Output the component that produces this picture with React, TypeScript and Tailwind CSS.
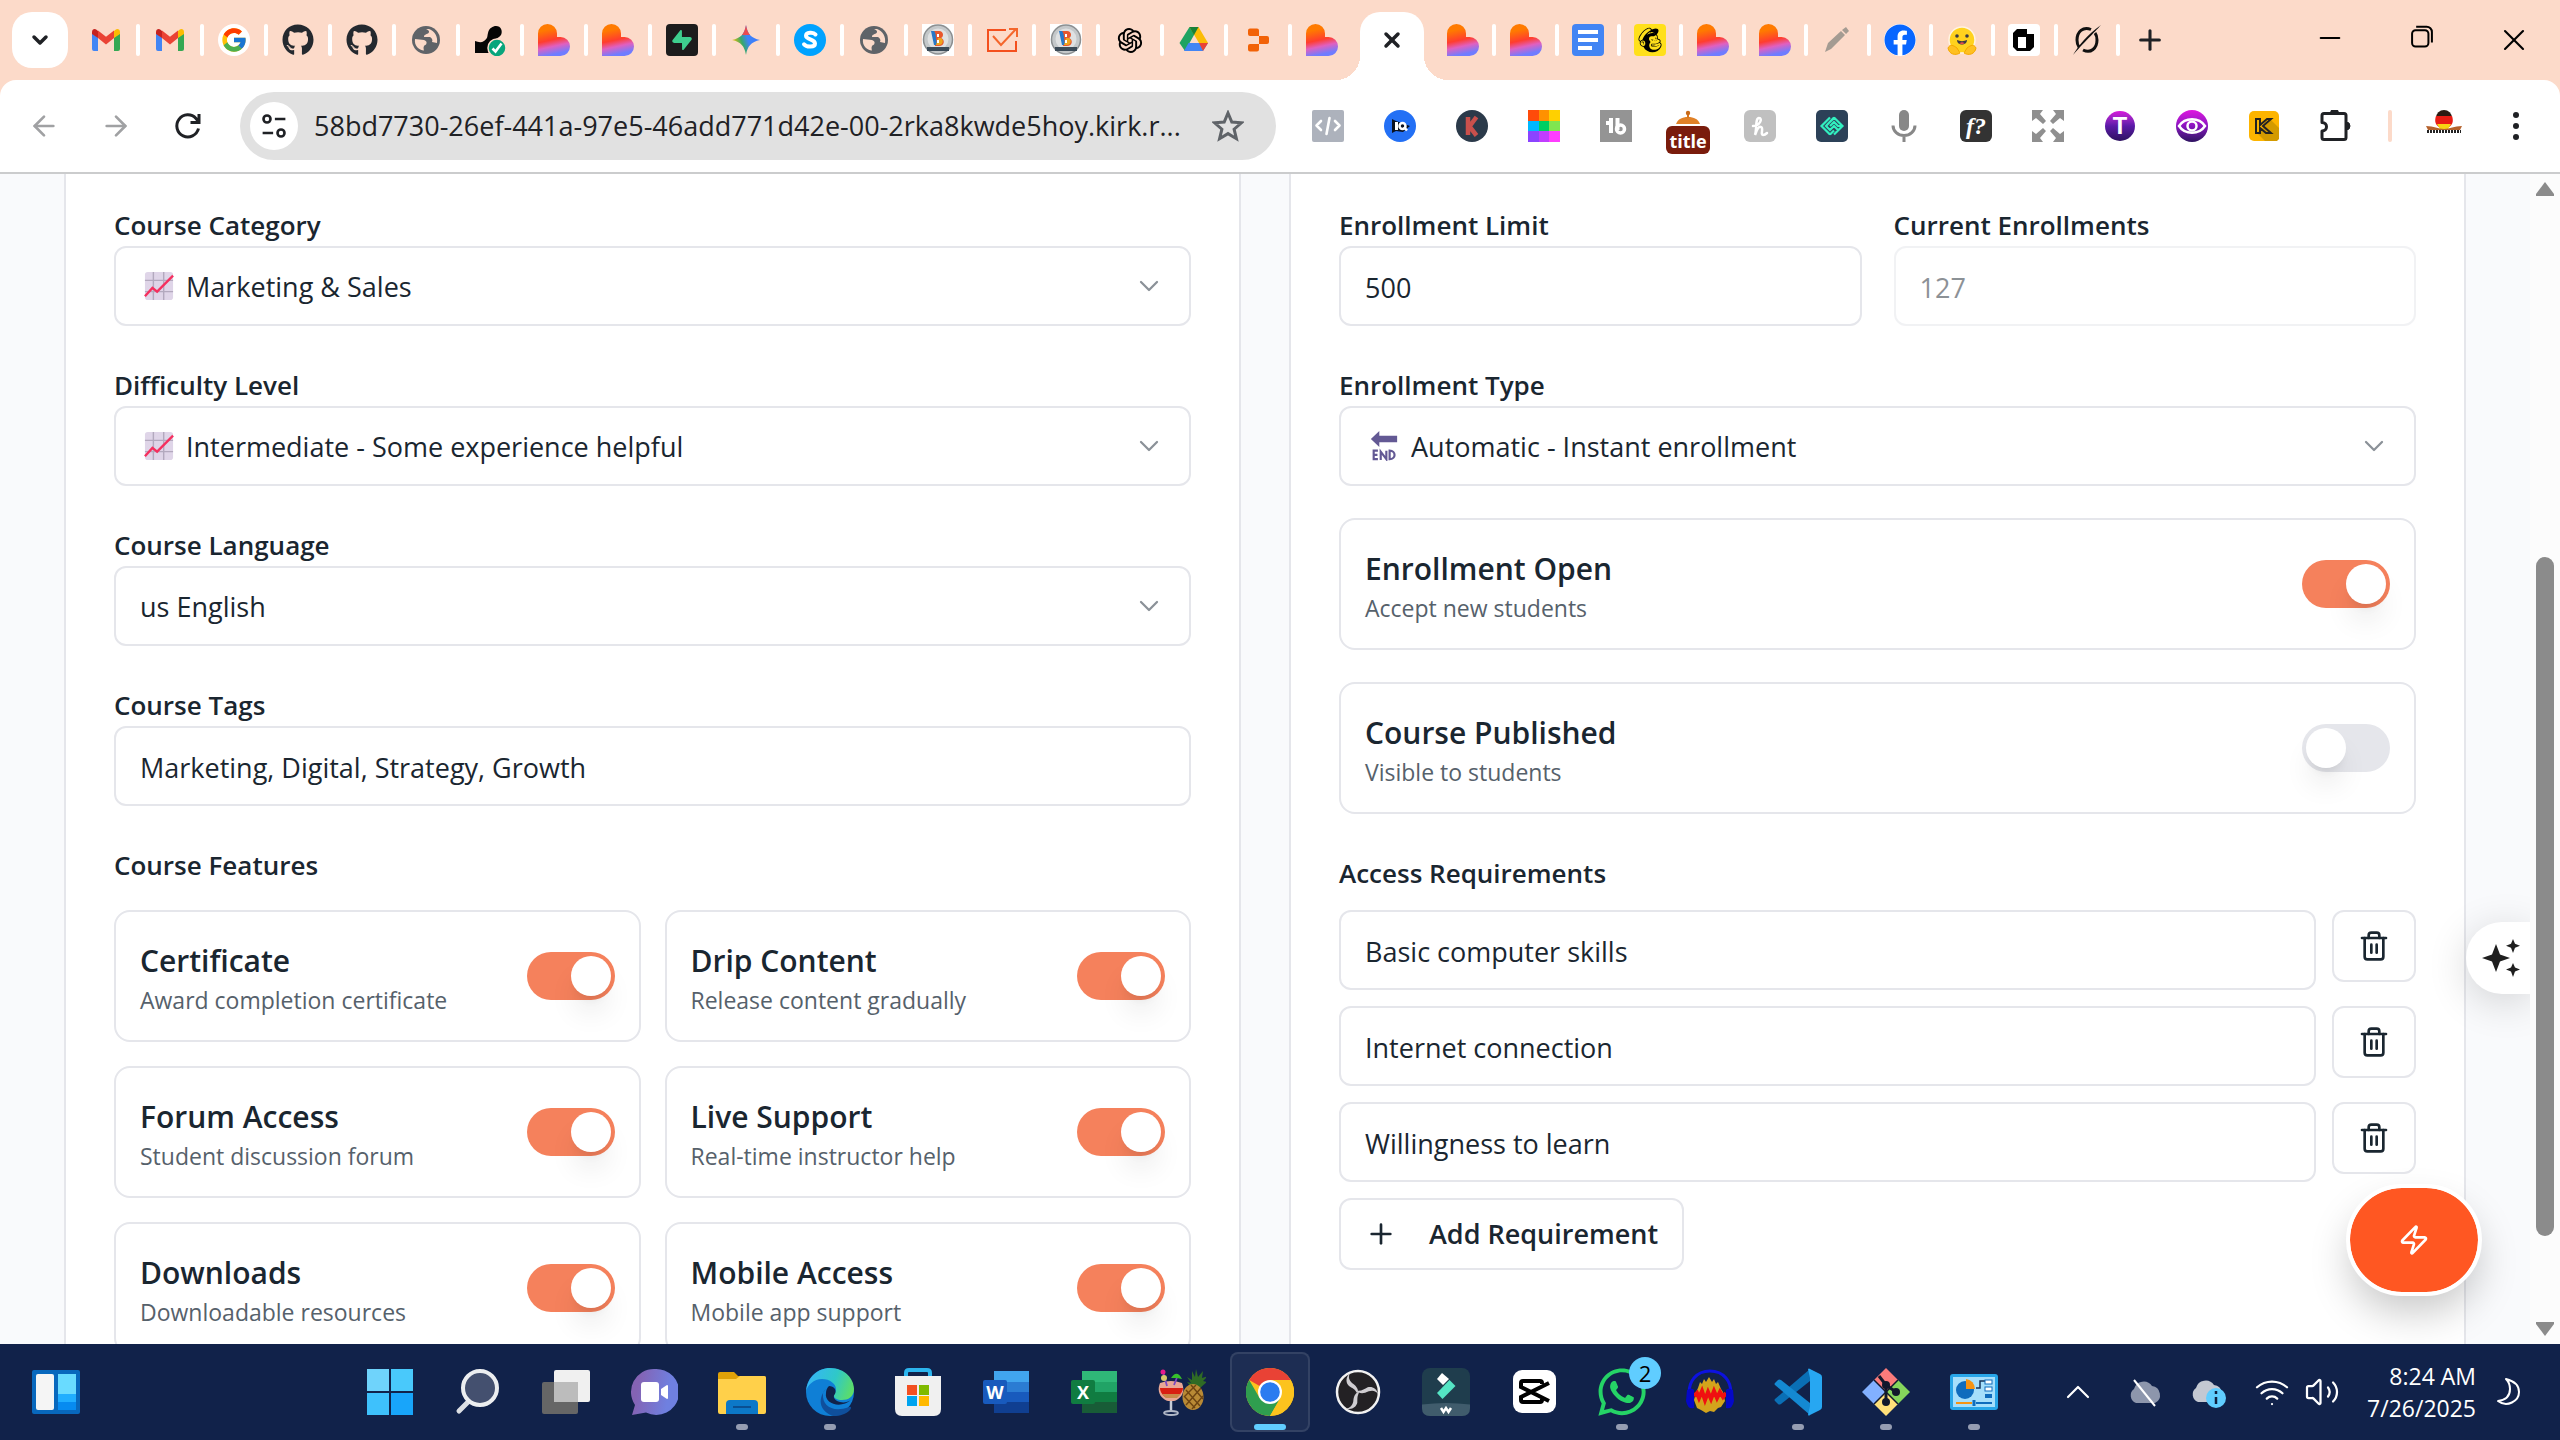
import React, { useId, useState } from "react";
import { ArrowLeft, ArrowRight, ChevronDown, ChevronUp, Minus, Plus, Trash2, Wifi, Volume2, X, Zap } from "lucide-react";
import { FaGithub, FaFacebook, FaMailchimp, FaWhatsapp } from "react-icons/fa";
import { FcGoogle } from "react-icons/fc";
import { AiOutlineOpenAI } from "react-icons/ai";
import { SiSupabase } from "react-icons/si";

type IconProps = { children?: React.ReactNode; box?: string; className?: string };

function Svg({ children, box = "0 0 32 32", className = "size-8" }: IconProps) {
  return (
    <svg viewBox={box} className={className} fill="none" aria-hidden="true">
      {children}
    </svg>
  );
}

/* ---------- favicons ---------- */

const Gmail = () => (
  <Svg>
    <path d="M2 27V9l6 4.500V27H4a2 2 0 0 1-2-2z" fill="#4285f4" />
    <path d="M24 27V13.500L30 9v16a2 2 0 0 1-2 2z" fill="#34a853" />
    <path d="M24 14V7l1.500-1.300C27.500 4 30 5.300 30 8v2z" fill="#fbbc04" />
    <path d="M2 10V8c0-2.700 2.500-4 4.500-2.300L8 7v7z" fill="#c5221f" />
    <path d="M8 14V6.500l8 6.200 8-6.200V14l-8 6.500z" fill="#ea4335" />
  </Svg>
);
const Google = () => (
  <span className="flex size-8 items-center justify-center rounded-full bg-white">
    <FcGoogle className="size-7" />
  </span>
);
const Github = () => <FaGithub className="size-8 text-[#24292f]" />;
const Globe = () => (
  <Svg>
    <circle cx="16" cy="16" r="14" fill="#5f6368" />
    <path d="M16 5c3 1 4 3 2 4.500-2 1-4 1-4 3.500h6c2 1 3 3 2 5l5 1c1-6-2-12-8-14zM5 15l9 1c3 1 3 3 2 4.500-2 1-3 2-2 6C9 26 4 22 5 15z" fill="#fcdac9" />
  </Svg>
);
const CheckBlob = () => (
  <Svg>
    <path d="M1 29V17c3 1 6 2 9 0 4-3 3-4 4-8 1-5 5-7 8-7 5 0 7 5 5 9-2 3-5 3-7 6l-4 12z" fill="#050505" />
    <circle cx="23" cy="24" r="9" fill="#08a57c" stroke="#fcdac9" strokeWidth="1.500" />
    <path d="m18.500 24.500 3 3 6-8" stroke="#fff" strokeWidth="2.600" />
  </Svg>
);
const Heart = () => {
  const id = useId();
  return (
    <Svg>
      <defs>
        <linearGradient id={id} x1="13" y1="0" x2="20" y2="32" gradientUnits="userSpaceOnUse">
          <stop offset=".15" stopColor="#ff7a00" />
          <stop offset=".48" stopColor="#ff3d2e" />
          <stop offset=".68" stopColor="#e060c0" />
          <stop offset=".92" stopColor="#6f7cff" />
        </linearGradient>
      </defs>
      <path d="M0 9.500A9.500 9.500 0 0 1 19 9.500V13h3.500a9.500 9.500 0 0 1 0 19H0z" fill={`url(#${id})`} />
    </Svg>
  );
};
const Supabase = () => (
  <span className="flex size-8 items-center justify-center rounded-sm bg-[#1c1c1c]">
    <SiSupabase className="size-5 text-[#3ecf8e]" />
  </span>
);
const Gemini = () => {
  const id = useId();
  return (
    <Svg>
      <defs>
        <linearGradient id={id} x1="4" y1="22" x2="28" y2="14" gradientUnits="userSpaceOnUse">
          <stop offset="0" stopColor="#f5c000" />
          <stop offset=".35" stopColor="#35a86b" />
          <stop offset=".6" stopColor="#3f83f5" />
          <stop offset="1" stopColor="#3a7cff" />
        </linearGradient>
      </defs>
      <path d="M16 1c1.500 9 5 13 14 15-9 2-12.500 6-14 15-1.500-9-5-13-14-15 9-2 12.500-6 14-15z" fill={`url(#${id})`} />
      <path d="M16 1c.8 4.500 2 7.500 4 10h-8c2-2.500 3.200-5.500 4-10z" fill="#ea4a50" />
    </Svg>
  );
};
const Skype = () => (
  <Svg>
    <circle cx="16" cy="16" r="16" fill="#00a2ff" />
    <path d="M21.500 10.500c-2-2.500-9.500-2.500-9.500 1.300 0 4.200 9 3 9 7.700 0 4-8.500 4-11 .8" stroke="#fff" strokeWidth="4" strokeLinecap="round" />
  </Svg>
);
const Badge = () => (
  <Svg>
    <path d="M0 0h32v32H0z" fill="#fff" />
    <circle cx="16" cy="15.500" r="14.500" fill="#c4c8ca" stroke="#8b8f91" strokeWidth="1.500" />
    <circle cx="16" cy="15" r="10.500" fill="#dfe1e2" />
    <path d="M10 7h7c5 0 5 6 2 7 4 1 4 8-2 8h-4z" fill="#e8572d" />
    <path d="M9 7h3c3 3 1 9 4 14h-4z" fill="#2878c8" />
    <path d="M16 14h3c3 2 2 7-2 7h-3z" fill="#eea51c" />
    <path d="M15 10h2v3h-2zM15 16h2v3h-2z" fill="#fff" />
    <path d="M5 23h22v4H5z" fill="#3c4b58" />
  </Svg>
);
const CheckSquare = () => (
  <Svg>
    <path d="M20 6H2v21h28V17" stroke="#f4501e" strokeWidth="2" />
    <path d="m7 12 8 9L30 5m-7 0h8v8" stroke="#f4662c" strokeWidth="2" />
  </Svg>
);
const OpenAi = () => <AiOutlineOpenAI className="size-8 text-black" />;
const Drive = () => (
  <Svg>
    <path d="M11.500 3h9L16 11 7 27 1.500 19z" fill="#1ea362" />
    <path d="M11.500 3h9L30 19h-9z" fill="#fbbc04" />
    <path d="M16 11 11.500 3h9z" fill="#188038" />
    <path d="M10.500 19H30l-5 8H6z" fill="#4285f4" />
    <path d="M21 19h9l-5 8z" fill="#ea4335" />
  </Svg>
);
const Replit = () => (
  <Svg>
    <path d="M6 6.500a2 2 0 0 1 2-2h7a2 2 0 0 1 2 2V12H8a2 2 0 0 1-2-2zM17 12h8a2 2 0 0 1 2 2v4a2 2 0 0 1-2 2h-8zM6 22a2 2 0 0 1 2-2h9v5.500a2 2 0 0 1-2 2H8a2 2 0 0 1-2-2z" fill="#f26207" />
  </Svg>
);
const Docs = () => (
  <Svg>
    <rect width="32" height="32" rx="4" fill="#4285f4" />
    <path d="M6 8h20M6 16h20M6 24h14" stroke="#fff" strokeWidth="4" />
  </Svg>
);
const Mailchimp = () => (
  <span className="flex size-8 items-center justify-center rounded-sm bg-[#ffe01b]">
    <FaMailchimp className="size-7 text-black" />
  </span>
);
const Pen = () => (
  <Svg>
    <path d="m4 28 3-9L20 7l4 4L10 25zM21 6l4-3 3 4-3 3z" fill="#a49b92" />
  </Svg>
);
const Facebook = () => (
  <span className="flex size-8 items-center justify-center rounded-full bg-white">
    <FaFacebook className="size-8 text-[#0866ff]" />
  </span>
);
const Hugging = () => (
  <Svg>
    <circle cx="16" cy="16" r="13" fill="#ffd21e" stroke="#fff3e0" strokeWidth="1.500" />
    <circle cx="11" cy="12" r="1.800" fill="#3a3b45" />
    <circle cx="21" cy="12" r="1.800" fill="#3a3b45" />
    <path d="M11 16c3 1.500 7 1.500 10 0 0 6-10 6-10 0z" fill="#3a3b45" />
    <path d="M13.500 19c2-1 3-1 5 0-1 1.500-4 1.500-5 0z" fill="#ef4e4e" />
    <path d="M2 24c2-4 5-3 9 0l3 5c-5 3-11 1-12-5zM30 24c-2-4-5-3-9 0l-3 5c5 3 11 1 12-5z" fill="#ffc021" stroke="#f5a800" />
  </Svg>
);
const Cube = () => (
  <Svg>
    <rect width="32" height="32" rx="4" fill="#fff" />
    <path d="M5 9l4-4h10v5h7v13l-4 4H9l-4-4z" fill="#000" />
    <path d="M10 13h8v11h-8z" fill="#fff" />
  </Svg>
);
const Slashed = () => (
  <Svg>
    <path d="M20 5.500C12 2 6 8 6 16c0 3 .8 5.500 2 7M12 26c8 4 14-2 14-10 0-3-.8-5.500-2-7" stroke="#111" strokeWidth="3" />
    <path d="M30 1C22 10 18 13 2 31c6-10 14-20 28-30z" fill="#111" />
  </Svg>
);

/* ---------- toolbar extensions ---------- */

const CodeExt = () => (
  <Svg>
    <rect width="32" height="32" rx="2" fill="#adb2bc" />
    <path d="m9 11-4.500 4.500L9 20M23 11l4.500 4.500L23 20M17.500 8l-3 16" stroke="#fff" strokeWidth="2.600" strokeLinecap="round" strokeLinejoin="round" />
  </Svg>
);
const IqExt = () => (
  <Svg>
    <circle cx="16" cy="16" r="16" fill="#2370f5" />
    <path d="M8 9v14l4-2 7 1 7-6-14-5z" fill="#0b1220" />
    <path d="M12.500 12v8" stroke="#fff" strokeWidth="3" />
    <circle cx="18.500" cy="16" r="3" stroke="#fff" strokeWidth="2.500" />
    <path d="m20 17 3 3.500" stroke="#fff" strokeWidth="2.500" />
  </Svg>
);
const LetterDisc = () => (
  <Svg>
    <circle cx="16" cy="16" r="16" fill="#2b3a4a" />
    <path d="M12 7v18M20.500 7l-7 9.500 7 9" stroke="#c9504c" strokeWidth="4.500" />
  </Svg>
);
const Palette = () => (
  <span className="grid size-8 grid-cols-3 grid-rows-3">
    <i className="bg-[#ff4b0a]" /><i className="bg-[#ff9100]" /><i className="bg-[#ffd000]" />
    <i className="bg-[#00b8ff]" /><i className="bg-[#00cf63]" /><i className="bg-[#80e650]" />
    <i className="bg-[#8b44ff]" /><i className="bg-[#c13dff]" /><i className="bg-[#ff3dff]" />
  </span>
);
const TbExt = () => (
  <Svg>
    <path d="M0 0h32v32H0z" fill="#949494" />
    <path d="M6 13h7M11 8v15M17.500 8v12" stroke="#fff" strokeWidth="4" />
    <circle cx="20.500" cy="19" r="4" stroke="#fff" strokeWidth="3.500" />
  </Svg>
);
const TitleExt = () => (
  <span className="mt-3 flex flex-col items-center">
    <Svg box="0 0 32 16" className="h-4 w-8">
      <path d="M4 14c2-5 6-7 12-7s10 2 12 7z" fill="#e08127" />
      <path d="M16 3v5" stroke="#d9771f" strokeWidth="2" />
      <circle cx="16" cy="3" r="2.200" fill="#c96b1a" />
    </Svg>
    <span className="flex h-7 w-11 items-center justify-center rounded-md bg-[#7a1c0c] pt-0.5 text-lg leading-none font-bold text-white">title</span>
  </span>
);
const HoneyExt = () => (
  <Svg>
    <rect width="32" height="32" rx="6" fill="#c0c0c0" />
    <path d="M9 16c7 0 10-8 6-8-4 0-2 12-4 17 2-6 4-9 6-8 3 1-1 8 2 8 2 0 3-1 4-2" stroke="#fff" strokeWidth="2.500" strokeLinecap="round" />
  </Svg>
);
const DiamondExt = () => (
  <Svg>
    <rect width="32" height="32" rx="5" fill="#2c4158" />
    <path d="M14 7.500 5.500 16l8.500 8.500M18 7.500l8.500 8.500-8.500 8.500M18 7.500l-8 8.500 4 4 4-4 4 4M14 12l4-4M27 16h-5l-4-4-4 4M14 24.500l4-4" stroke="#32f0c0" strokeWidth="2.200" />
  </Svg>
);
const FExt = () => (
  <span className="flex size-8 items-center justify-center rounded-md bg-[#333] font-['Liberation_Serif',serif] text-2xl leading-none font-bold text-white italic">f?</span>
);
const Expand = () => (
  <Svg>
    <path d="M0 0h11L8 4l6 7-3 3-7-6-4 3zM32 0v11l-4-3-7 6-3-3 6-7-3-4zM0 32V21l4 3 7-6 3 3-6 7 3 4zM32 32H21l3-4-6-7 3-3 7 6 4-3z" fill="#8f8f8f" />
  </Svg>
);
const TDisc = () => (
  <span className="flex size-[30px] items-center justify-center rounded-full bg-linear-to-b from-[#d916dc] via-[#5b1aa8] to-[#2d1260] font-['Roboto',sans-serif] text-2xl leading-none font-bold text-white">T</span>
);
const EyeDisc = () => (
  <span className="flex size-8 items-center justify-center rounded-full bg-linear-to-b from-[#e014e0] via-[#8a12c0] to-[#2d1260]">
    <Svg>
      <path d="M3 16c6-9 20-9 26 0-6 9-20 9-26 0z" stroke="#fff" strokeWidth="2.500" />
      <circle cx="16" cy="16" r="4.500" stroke="#fff" strokeWidth="2.500" />
    </Svg>
  </span>
);
const KBox = () => (
  <Svg>
    <rect x="1" y="1" width="30" height="30" rx="5" fill="#fdb400" />
    <path d="m9 23 8 8h12l2-2V18l-8-8z" fill="#d39a00" />
    <path d="M8 9h4v6l7-6h4l-8 7 8 7h-5l-6-5v5H8z" stroke="#222" strokeWidth="2" />
  </Svg>
);
const Puzzle = () => (
  <Svg>
    <path d="M2 5.500q0-2 2-2h20q2 0 2 2v22q0 2-2 2H4q-2 0-2-2v-6.500c6 0 6-8.500 0-8.500z" stroke="#1f2125" strokeWidth="3" strokeLinejoin="round" />
    <path d="M10.500 3a4 4 0 0 1 8 0zM26 12a4 4 0 0 1 0 8z" fill="#1f2125" stroke="#1f2125" />
  </Svg>
);
const Avatar = () => (
  <Svg box="0 0 40 32" className="h-8 w-10">
    <path d="M12 8a8 8 0 0 1 16 0z" fill="#2b1a12" />
    <path d="M12 6h16c2 6 0 9-3 11H15c-3-2-5-5-3-11z" fill="#e81c14" />
    <path d="M13 14h14l-3 5h-8z" fill="#f8d312" />
    <path d="M2 16c8 0 12 3 18 3s10-3 18-3l-2 4H4z" fill="#b5622c" />
    <path d="M3 21.500h34" stroke="#222" strokeWidth="3" strokeDasharray="2 1" />
  </Svg>
);
const MicIcon = () => (
  <Svg>
    <rect x="11" y="0" width="10" height="21" rx="5" fill="#888" />
    <path d="M5 15.500a11 10 0 0 0 22 0M16 26v6" stroke="#888" strokeWidth="3" />
  </Svg>
);

const leftTabs: [string, React.FC][] = [
  ["Gmail inbox", Gmail], ["Gmail", Gmail], ["Google", Google], ["GitHub", Github], ["GitHub repository", Github],
  ["Website", Globe], ["Verified", CheckBlob], ["Lovable", Heart], ["Lovable project", Heart], ["Supabase", Supabase],
  ["Gemini", Gemini], ["Skype", Skype], ["Site", Globe], ["Badge", Badge], ["Tasks", CheckSquare], ["Badge admin", Badge],
  ["ChatGPT", OpenAi], ["Drive", Drive], ["Replit", Replit], ["Lovable editor", Heart],
];
const rightTabs: [string, React.FC][] = [
  ["Lovable preview", Heart], ["Lovable app", Heart], ["Docs", Docs], ["Mailchimp", Mailchimp], ["Lovable docs", Heart],
  ["Lovable home", Heart], ["Editor", Pen], ["Facebook", Facebook], ["Hugging Face", Hugging], ["Cube", Cube], ["Grok", Slashed],
];

function TabStrip() {
  return (
    <div className="flex h-20 items-center">
      <button aria-label="Search tabs" className="ml-3 flex size-14 shrink-0 items-center justify-center rounded-[20px] bg-white text-[#1f2125]">
        <ChevronDown className="size-6" strokeWidth={3.500} />
      </button>
      <div className="ml-1.5 flex">
        {leftTabs.map(([name, Icon], i) => (
          <button key={name} aria-label={name} className="relative flex h-8 w-16 shrink-0 items-center justify-center">
            <Icon />
            {i < leftTabs.length - 1 && <span className="absolute -right-0.5 h-8 w-1 rounded-full bg-white" />}
          </button>
        ))}
      </div>
      <div className="relative ml-1.5 flex h-[68px] w-16 shrink-0 items-center justify-center self-end rounded-t-[20px] bg-white">
        <span className="absolute bottom-0 -left-6 size-6 bg-[radial-gradient(circle_at_0_0,transparent_24px,white_24px)]" />
        <span className="absolute -right-6 bottom-0 size-6 bg-[radial-gradient(circle_at_100%_0,transparent_24px,white_24px)]" />
        <button aria-label="Close tab" className="mb-3 text-[#1f2125]"><X className="size-6" strokeWidth={3.500} /></button>
      </div>
      <div className="ml-2 flex w-[686px] shrink-0">
        {rightTabs.map(([name, Icon]) => (
          <button key={name} aria-label={name} className="relative flex h-8 flex-1 items-center justify-center">
            <Icon />
            <span className="absolute -right-0.5 h-8 w-1 rounded-full bg-white" />
          </button>
        ))}
      </div>
      <button aria-label="New tab" className="ml-4 text-[#1f2125]"><Plus className="size-8" strokeWidth={2.300} /></button>
      <div className="ml-auto flex text-black">
        <button aria-label="Minimize" className="flex w-[92px] justify-center"><Minus className="size-8" strokeWidth={1.500} /></button>
        <button aria-label="Restore" className="flex w-[92px] justify-center">
          <Svg box="0 0 24 24" className="size-7">
            <rect x="3.500" y="7" width="14" height="14" rx="3" stroke="#000" strokeWidth="1.700" />
            <path d="M7 4h9a4.500 4.500 0 0 1 4.500 4.500v9" stroke="#000" strokeWidth="1.700" />
          </Svg>
        </button>
        <button aria-label="Close" className="flex w-[92px] justify-center"><X className="size-9" strokeWidth={1.400} /></button>
      </div>
    </div>
  );
}

const extensions: [string, React.FC][] = [
  ["Code", CodeExt], ["IQ", IqExt], ["Keywords", LetterDisc], ["Colors", Palette], ["Toolbox", TbExt], ["Title", TitleExt],
  ["Honey", HoneyExt], ["Diamond", DiamondExt], ["Microphone", MicIcon], ["Fonts", FExt], ["Full page", Expand],
  ["Type", TDisc], ["Vision", EyeDisc], ["Kit", KBox], ["Extensions", Puzzle],
];

function Toolbar() {
  return (
    <div className="flex h-[94px] items-center rounded-t-2xl border-b-2 border-[#cbcccd] bg-white">
      <div className="ml-2 flex shrink-0">
        <button aria-label="Back" className="flex w-[72px] justify-center text-[#a0a1a3]"><ArrowLeft className="size-8" /></button>
        <button aria-label="Forward" className="flex w-[72px] justify-center text-[#a0a1a3]"><ArrowRight className="size-8" /></button>
        <button aria-label="Reload" className="flex w-[72px] justify-center">
          <Svg>
            <path d="M26.500 18.500A11 11 0 1 1 24 8.500l2.500 3M27 4v8.500h-8.500" stroke="#1f2125" strokeWidth="3" />
          </Svg>
        </button>
      </div>
      <div className="ml-4 flex h-[68px] min-w-0 flex-1 items-center rounded-full bg-[#e1e1e1] pr-8 pl-2.5">
        <button aria-label="Site information" className="flex size-12 shrink-0 items-center justify-center rounded-full bg-white">
          <Svg className="size-7">
            <circle cx="8" cy="8" r="4" stroke="#1f2125" strokeWidth="3" />
            <circle cx="24" cy="24" r="4" stroke="#1f2125" strokeWidth="3" />
            <path d="M17 8h12M3 24h12" stroke="#1f2125" strokeWidth="3" />
          </Svg>
        </button>
        <input
          aria-label="Address"
          className="ml-4 min-w-0 flex-1 bg-transparent text-[27px] text-[#1f2125] outline-none"
          defaultValue="58bd7730-26ef-441a-97e5-46add771d42e-00-2rka8kwde5hoy.kirk.r..."
        />
        <button aria-label="Bookmark">
          <Svg>
            <path d="m16 3 3.800 9 9.700.8-7.400 6.400 2.300 9.500L16 23.600l-8.400 5.100 2.300-9.500-7.400-6.400 9.700-.8z" stroke="#5f6368" strokeWidth="3" />
          </Svg>
        </button>
      </div>
      <div className="ml-4 flex shrink-0 items-center">
        {extensions.map(([name, Icon]) => (
          <button key={name} aria-label={name} className="flex h-16 w-[72px] items-center justify-center"><Icon /></button>
        ))}
      </div>
      <span className="ml-4 h-8 w-1 shrink-0 rounded-full bg-[#fcdac9]" />
      <button aria-label="Profile" className="ml-8"><Avatar /></button>
      <button aria-label="Menu" className="mr-7 ml-9">
        <Svg>
          <circle cx="16" cy="5" r="3" fill="#1f2125" /><circle cx="16" cy="16" r="3" fill="#1f2125" /><circle cx="16" cy="27" r="3" fill="#1f2125" />
        </Svg>
      </button>
    </div>
  );
}

/* ---------- form ---------- */

const labelStyle = "flex h-12 items-end text-[26px] leading-[42px] font-semibold";
const boxStyle = "h-20 w-full rounded-xl border-2 border-[#e5e6eb] bg-white px-6 pt-0.5 text-[27px] outline-none";

const ChartEmoji = () => (
  <Svg className="size-[30px]">
    <rect x="1" y="1" width="30" height="30" rx="3" fill="#dfd5e8" />
    <path d="M10 1v30M21 1v30M1 10h30M1 22h30" stroke="#b3a9be" strokeWidth="1.500" />
    <path d="m1 27 8-9 5 4L31 5" stroke="#f5305f" strokeWidth="2.500" />
  </Svg>
);
const EndEmoji = () => (
  <Svg className="size-[30px]">
    <path d="M2 8.500 11 0v5h19v7H11v5z" fill="#635994" />
    <path d="M9.500 21H5v9h4.500M5 25.500h4M12.500 31v-9l6 8v-9M22 21v9c7 0 7-9 0-9z" stroke="#635994" strokeWidth="2.300" />
  </Svg>
);

function TextField({ label, value, disabled }: { label: string; value: string; disabled?: boolean }) {
  const id = useId();
  return (
    <div>
      <label htmlFor={id} className={labelStyle}>{label}</label>
      <input id={id} defaultValue={value} disabled={disabled} className={`${boxStyle} disabled:opacity-50`} />
    </div>
  );
}

function SelectField({ label, value, icon }: { label: string; value: string; icon?: React.ReactNode }) {
  const id = useId();
  return (
    <div>
      <label htmlFor={id} className={labelStyle}>{label}</label>
      <div className="relative flex items-center">
        <select id={id} className={`${boxStyle} appearance-none ${icon ? "pl-[70px]" : ""}`}>
          <option>{value}</option>
        </select>
        {icon && <span className="pointer-events-none absolute left-[30px]">{icon}</span>}
        <ChevronDown className="pointer-events-none absolute right-[26px] size-8 text-[#8b9198]" strokeWidth={1.700} />
      </div>
    </div>
  );
}

function ToggleCard({ title, note, on = true }: { title: string; note: string; on?: boolean }) {
  const id = useId();
  const [checked, setChecked] = useState(on);
  return (
    <div className="flex h-[132px] items-center justify-between rounded-2xl border-2 border-[#e5e6eb] px-6">
      <label htmlFor={id} className="pt-1.5">
        <span className="block text-[30px] leading-[42px] font-semibold">{title}</span>
        <span className="block text-[23px] leading-9 text-[#56616b]">{note}</span>
      </label>
      <input
        id={id}
        type="checkbox"
        role="switch"
        checked={checked}
        onChange={(e) => setChecked(e.target.checked)}
        className="h-12 w-[88px] shrink-0 appearance-none rounded-full bg-[#e5e6eb] p-1 before:block before:size-10 before:rounded-full before:bg-white before:shadow-[0_20px_30px_-6px_rgba(0,0,0,0.12),0_8px_12px_-8px_rgba(0,0,0,0.15)] checked:bg-[#f5815c] checked:before:ml-10"
      />
    </div>
  );
}

const features = [
  ["Certificate", "Award completion certificate"],
  ["Drip Content", "Release content gradually"],
  ["Forum Access", "Student discussion forum"],
  ["Live Support", "Real-time instructor help"],
  ["Downloads", "Downloadable resources"],
  ["Mobile Access", "Mobile app support"],
];
const requirements = ["Basic computer skills", "Internet connection", "Willingness to learn"];

function CourseForm() {
  return (
    <main className="relative min-w-0 flex-1 overflow-hidden bg-[#f9fafc] px-16">
      <div className="grid grid-cols-2 gap-12">
        <section className="space-y-8 border-x-2 border-[#e5e6eb] bg-white px-12 pt-6 pb-12">
          <SelectField label="Course Category" value="Marketing & Sales" icon={<ChartEmoji />} />
          <SelectField label="Difficulty Level" value="Intermediate - Some experience helpful" icon={<ChartEmoji />} />
          <SelectField label="Course Language" value="us English" />
          <TextField label="Course Tags" value="Marketing, Digital, Strategy, Growth" />
          <div>
            <h3 className={labelStyle}>Course Features</h3>
            <div className="mt-6 grid grid-cols-2 gap-6">
              {features.map(([title, note]) => <ToggleCard key={title} title={title} note={note} />)}
            </div>
          </div>
        </section>
        <section className="space-y-8 border-x-2 border-[#e5e6eb] bg-white px-12 pt-6 pb-12">
          <div className="grid grid-cols-2 gap-8">
            <TextField label="Enrollment Limit" value="500" />
            <TextField label="Current Enrollments" value="127" disabled />
          </div>
          <SelectField label="Enrollment Type" value="Automatic - Instant enrollment" icon={<EndEmoji />} />
          <ToggleCard title="Enrollment Open" note="Accept new students" />
          <ToggleCard title="Course Published" note="Visible to students" on={false} />
          <div>
            <h3 className={labelStyle}>Access Requirements</h3>
            <div className="mt-4 space-y-4">
              {requirements.map((text) => (
                <div key={text} className="flex gap-4">
                  <input aria-label="Access requirement" defaultValue={text} className={boxStyle} />
                  <button aria-label={`Remove ${text}`} className="flex h-[72px] w-[84px] shrink-0 items-center justify-center rounded-xl border-2 border-[#e5e6eb]">
                    <Trash2 className="size-8" />
                  </button>
                </div>
              ))}
              <button className="flex h-[72px] items-center gap-8 rounded-xl border-2 border-[#e5e6eb] px-6 text-[27px] font-semibold">
                <Plus className="size-8" />
                Add Requirement
              </button>
            </div>
          </div>
        </section>
      </div>
      <button aria-label="Assistant" className="absolute right-0 bottom-[350px] flex h-[72px] w-16 items-center rounded-l-full bg-white pl-4 shadow-[0_8px_40px_rgba(0,0,0,0.16)]">
        <Svg box="0 0 40 40" className="size-10">
          <path d="m14 6 4 10.500L28 20 18 23.500 14 34l-4-10.500L0 20l10-3.500zM31 1l2 4.700 5 2-5 2L31 15l-2-5.300-5-2 5-2zM31 25l2 4.500 5 2-5 2L31 39l-2-5.500-5-2 5-2z" fill="#1f1f1f" />
        </Svg>
      </button>
      <button aria-label="Quick actions" className="absolute right-12 bottom-12 flex h-28 w-[136px] items-center justify-center rounded-full border-4 border-white bg-[#ff5722] bg-clip-padding text-white shadow-[0_20px_40px_-4px_rgba(0,0,0,0.22)]">
        <Zap className="size-8" />
      </button>
    </main>
  );
}

function Scrollbar() {
  return (
    <div className="flex w-[30px] shrink-0 flex-col items-center bg-[#fcfcfc] py-2" aria-hidden="true">
      <Svg box="0 0 18 14" className="h-3.5 w-[18px]"><path d="M9 0 18 12v2H0v-2z" fill="#8b8b8b" /></Svg>
      <span className="grow-[360]" />
      <span className="w-[18px] grow-[678] rounded-full bg-[#8b8b8b]" />
      <span className="grow-[86]" />
      <Svg box="0 0 18 14" className="h-3.5 w-[18px]"><path d="M9 14 0 2V0h18v2z" fill="#8b8b8b" /></Svg>
    </div>
  );
}

/* ---------- taskbar ---------- */

const big = "size-12";
const Widgets = () => (
  <Svg box="0 0 48 48" className={big}>
    <rect y="2" width="48" height="44" rx="2" fill="#0868bd" />
    <rect x="4" y="6" width="18" height="36" rx="2" fill="#f5f5f5" />
    <path d="M26 6h18v20H26z" fill="#69dbff" /><path d="M26 26h18v8H26z" fill="#20aeff" /><path d="M26 34h18v8H26z" fill="#078bf0" />
  </Svg>
);
const Start = () => (
  <Svg box="0 0 48 48" className={big}>
    <path d="M1 1h22v22H1z" fill="#6fd3fb" /><path d="M25 1h22v22H25z" fill="#49c9fb" />
    <path d="M1 25h22v22H1z" fill="#3ec1fc" /><path d="M25 25h22v22H25z" fill="#18a5fa" />
  </Svg>
);
const Search = () => (
  <Svg box="0 0 48 48" className={big}>
    <path d="M16 32 5 43" stroke="#dcdfe3" strokeWidth="5" strokeLinecap="round" />
    <circle cx="26" cy="20" r="17" fill="#44506f" stroke="#eceef0" strokeWidth="4" />
  </Svg>
);
const TaskView = () => (
  <Svg box="0 0 48 48" className={big}>
    <rect y="14" width="36" height="32" rx="2" fill="#666" />
    <rect x="12" y="2" width="36" height="32" rx="2" fill="#f0f0f0" />
    <path d="M12 14h24v20H12z" fill="#bcbcbc" />
  </Svg>
);
const Chat = () => {
  const id = useId();
  return (
    <Svg box="0 0 48 48" className={big}>
      <defs>
        <linearGradient id={id} x1="8" y1="14" x2="40" y2="20" gradientUnits="userSpaceOnUse">
          <stop offset="0" stopColor="#8463b4" /><stop offset="1" stopColor="#6f80e0" />
        </linearGradient>
      </defs>
      <path d="M24 1a23 23 0 1 1-8 43.500L2 47l3-10A23 23 0 0 1 24 1z" fill={`url(#${id})`} />
      <rect x="11" y="14" width="18" height="20" rx="3" fill="#fff" /><path d="m31 21 6-4q1 0 1 1v12q0 1-1 1l-6-4z" fill="#fff" />
    </Svg>
  );
};
const Folder = () => (
  <Svg box="0 0 48 48" className={big}>
    <path d="M0 6q0-2 2-2h14l4 4h26q2 0 2 2v8H0z" fill="#e0a208" />
    <path d="M0 11h18l4-3h24q2 0 2 2v34q0 2-2 2H2q-2 0-2-2z" fill="#ffd04a" />
    <path d="M8 46V36q0-4 4-4h24q4 0 4 4v10z" fill="#0c78c8" /><path d="M15 39h18" stroke="#0a4f92" strokeWidth="2" />
  </Svg>
);
const Edge = () => {
  const id = useId();
  return (
    <Svg box="0 0 48 48" className={big}>
      <defs>
        <linearGradient id={id} x1="0" y1="8" x2="48" y2="26" gradientUnits="userSpaceOnUse">
          <stop offset=".1" stopColor="#35b8f0" /><stop offset=".55" stopColor="#2fc8c8" /><stop offset="1" stopColor="#63e05a" />
        </linearGradient>
      </defs>
      <circle cx="24" cy="24" r="24" fill="#0f7fd6" />
      <path d="M0 24C1 9 12 0 24 0c15 0 24 11 24 21 0 8-6 11-12 11-5 0-8-2-8-4 0-3 2-3 2-7 0-5-6-10-14-10C8 11 1 17 0 24z" fill={`url(#${id})`} />
      <path d="M17 26c-1 12 10 19 26 13 2-1 3 1 1 3-4 4-10 6-16 6-13-3-18-16-8-27-2 2-3 3-3 5z" fill="#0f4f9c" />
      <path d="M23 18c5 0 8 4 6 8-2 2-2 6 5 8 4 1 8 0 11-2-10 9-27 4-25-7 0-3 1-5 3-7z" fill="#11224a" />
    </Svg>
  );
};
const Store = () => (
  <Svg box="0 0 48 48" className={big}>
    <path d="M12 10V5q0-3 3-3h18q3 0 3 3v5" stroke="#2cb5ee" strokeWidth="4" />
    <path d="M1 8h46v33q0 7-7 7H8q-7 0-7-7z" fill="#f0f0f0" />
    <path d="M13 17h10v10H13z" fill="#f25022" /><path d="M25 17h10v10H25z" fill="#7fba00" /><path d="M13 28h10v10H13z" fill="#00a4ef" /><path d="M25 28h10v10H25z" fill="#ffb900" />
  </Svg>
);
function Office({ letter, c }: { letter: string; c: string[] }) {
  return (
    <span className="relative flex size-12 items-center">
      <Svg box="0 0 48 48" className={big}>
        <path d="M12 3h35v11H12z" fill={c[0]} /><path d="M12 14h35v10H12z" fill={c[1]} /><path d="M12 24h35v10H12z" fill={c[2]} /><path d="M12 34h35v11H12z" fill={c[3]} />
        <rect x="1" y="12" width="24" height="24" rx="2" fill={c[4]} />
      </Svg>
      <span className="absolute left-px w-6 text-center text-lg leading-6 font-bold text-white">{letter}</span>
    </span>
  );
}
const Word = () => <Office letter="W" c={["#41a5ee", "#2b7cd3", "#185abd", "#103f91", "#185abd"]} />;
const Excel = () => <Office letter="X" c={["#2fb878", "#21a366", "#107c41", "#185c37", "#107c41"]} />;
const Cocktail = () => (
  <Svg box="0 0 48 48" className={big}>
    <path d="m34 20-5-6 4 1-4-6 5 3 0-9 3 6 1-8 2 8 5-6-1 7 6-2-5 5 4 1-7 6z" fill="#2f6b25" />
    <ellipse cx="35" cy="29" rx="10.500" ry="13" fill="#b98a35" />
    <path d="m28 22 14 16M26 28l11 12M33 17l12 14M43 20 28 37M45 28 34 41M38 17 26 29" stroke="#6d4412" strokeWidth="1.400" />
    <path d="M2 15q11-4 22 0c4 10-2 16-8 18h-6C4 31-2 25 2 15z" fill="#e8a795" /><path d="M2 20h23c0 4-4 8-8 10H9C5 28 2 24 2 20z" fill="#d81f12" />
    <path d="M4 26h19l-4 4H8z" fill="#c88a4a" /><path d="M13 33v11" stroke="#c5cbd6" strokeWidth="2.500" /><ellipse cx="13" cy="45" rx="7" ry="2" stroke="#b3bac8" strokeWidth="1.800" />
    <path d="m9 18-4-14M16 17l4-10" stroke="#7c4ac0" strokeWidth="1.800" /><path d="M13 10q6-9 11 1l-5-1z" fill="#36c12b" /><circle cx="5" cy="4" r="2.500" fill="#e71a8c" /><circle cx="6" cy="10" r="3" fill="#d9c96a" />
  </Svg>
);
const Chrome = () => (
  <Svg box="0 0 48 48" className={big}>
    <circle cx="24" cy="24" r="24" fill="#fcc31e" />
    <path d="M24 24 3.200 12A24 24 0 0 1 44.800 12H24z" fill="#e94235" />
    <path d="M3.200 12A24 24 0 0 0 24 48l10.400-18L24 24 13.600 30z" fill="#2f9e4f" />
    <path d="M24 12h20.800A24 24 0 0 1 24 48l10.400-18z" fill="#fcc31e" />
    <circle cx="24" cy="24" r="12" fill="#fff" /><circle cx="24" cy="24" r="9.800" fill="#2b7cf0" />
  </Svg>
);
const Obs = () => (
  <Svg box="0 0 48 48" className={big}>
    <circle cx="24" cy="24" r="21" fill="#232124" stroke="#f2f2f2" strokeWidth="2.500" />
    <g fill="#cfcdd1">
      <path id="obs-blade" d="M24 24c0-4-2-6-6-9-3-3-4-6-2-10-5 5-4 10-1 13 3 2 6 3 8 7z" />
      <path d="M24 24c0-4-2-6-6-9-3-3-4-6-2-10-5 5-4 10-1 13 3 2 6 3 8 7z" transform="rotate(120 24 24)" />
      <path d="M24 24c0-4-2-6-6-9-3-3-4-6-2-10-5 5-4 10-1 13 3 2 6 3 8 7z" transform="rotate(240 24 24)" />
    </g>
  </Svg>
);
const Filmora = () => (
  <Svg box="0 0 48 48" className={big}>
    <rect width="48" height="48" rx="8" fill="#1f3d4d" /><path d="M0 36.500q24-3 48 0V40q0 8-8 8H8q-8 0-8-8z" fill="#405c6c" />
    <path d="m20 5 7 6-6 6-6-6z" fill="#fff" /><path d="m27.500 12 6 6-13 13-5.500-6z" fill="#55e4c4" /><path d="m19 40 2.500 4 2.500-4 2.500 4 2.500-4" stroke="#fff" strokeWidth="2.500" />
  </Svg>
);
const CapCut = () => (
  <Svg box="0 0 48 48" className={big}>
    <rect x="3" y="2" width="43" height="43" rx="9" fill="#fff" />
    <path d="M39 15 11 29v3q0 2 2 2h17q2 0 2-2v-1M39 33 11 19v-4q0-2 2-2h17q2 0 2 2v1" stroke="#000" strokeWidth="4" />
  </Svg>
);
const WhatsApp = () => (
  <span className="relative">
    <FaWhatsapp className="size-[54px] text-[#25d366]" />
    <span className="absolute -top-2 -right-3 flex size-8 items-center justify-center rounded-full bg-[#60cdff] text-[22px] leading-none text-black">2</span>
  </span>
);
const Audacity = () => (
  <Svg box="0 0 48 48" className={big}>
    <path d="m8 32 2-8 2-4 2-6 2 2 2-5 2 3 3-5 3 5 2-3 2 5 2-2 3 7 2 3 2 9-4 6-3 1-4 4-4-1-4 2-5-3-4-2z" fill="#d3a41c" />
    <path d="m8 28 3-3 2 5 3-7 3 9 3-8 3 7 3-8 3 7 3-6 3 5 3-4" stroke="#f01010" strokeWidth="4" />
    <path d="M4 32C0 12 12 3 24 3s24 9 20 29" stroke="#0d12e0" strokeWidth="3" /><path d="M1 22q5-3 7 0v18q-6 2-8-7zM47 22q-5-3-7 0v18q6 2 8-7z" fill="#0508c8" />
  </Svg>
);
const Code = () => (
  <Svg box="0 0 48 48" className={big}>
    <path d="M1 31q-1 1 0 2l3 3q1 1 3 0L36 13V1z" fill="#0a6fb5" />
    <path d="M1 17q-1-1 0-2l3-3q1-1 3 0l29 23v12z" fill="#1489d2" />
    <path d="M36 1q-1-1-2 0l2 9v28l-2 9q1 1 2 0l10-5q2-1 2-3V9q0-2-2-3z" fill="#27a7f2" />
  </Svg>
);
const GitExt = () => (
  <Svg box="0 0 48 48" className={big}>
    <path d="m24 0 12 12-12 12-12-12z" fill="#fa7b7b" /><path d="m36 12 12 12-12 12-12-12z" fill="#85d65c" />
    <path d="m12 12 12 12-12 12L0 24z" fill="#82b0ff" /><path d="m24 24 12 12-12 12-12-12z" fill="#ffe07a" />
    <path d="m12 12 24 24M36 12 12 36" stroke="#11182c" strokeWidth="1.500" />
    <path d="m17 8 7 9v16M24 17l10 7" stroke="#11182c" strokeWidth="3" /><circle cx="24" cy="34" r="4" fill="#11182c" /><circle cx="34" cy="24" r="4" fill="#11182c" /><circle cx="24" cy="17" r="4" fill="#11182c" />
  </Svg>
);
const Panel = () => (
  <Svg box="0 0 48 48" className={big}>
    <rect y="6" width="48" height="36" rx="3" fill="#28a6e8" /><rect x="3" y="9" width="42" height="30" fill="#a6dffb" />
    <circle cx="15" cy="22" r="9" fill="#0f6cbd" /><path d="M16 11a10 10 0 0 1 9 10h-9z" fill="#f59312" />
    <path d="M26 20h4v-7h5" stroke="#17365c" strokeWidth="1.500" /><rect x="35" y="12" width="7" height="4" fill="#fff" stroke="#0f6cbd" /><rect x="35" y="19" width="7" height="4" fill="#fff" stroke="#0f6cbd" /><rect x="35" y="26" width="7" height="4" fill="#0f6cbd" />
    <path d="M6 35h16" stroke="#f59312" strokeWidth="2" /><path d="M26 35h16" stroke="#0f6cbd" strokeWidth="2" /><path d="M24 32v6" stroke="#0f6cbd" strokeWidth="3" />
  </Svg>
);

const apps: [string, React.FC, string?][] = [
  ["Start", Start], ["Search", Search], ["Task View", TaskView], ["Chat", Chat], ["File Explorer", Folder, "open"],
  ["Edge", Edge, "open"], ["Store", Store], ["Word", Word], ["Excel", Excel], ["Cocktail", Cocktail], ["Chrome", Chrome, "active"],
  ["OBS Studio", Obs], ["Filmora", Filmora], ["CapCut", CapCut], ["WhatsApp", WhatsApp, "open"], ["Audacity", Audacity],
  ["VS Code", Code, "open"], ["Git Extensions", GitExt, "open"], ["Control Panel", Panel, "open"],
];

function Taskbar() {
  return (
    <footer className="flex h-24 shrink-0 items-center bg-[#11224a] text-white">
      <button aria-label="Widgets" className="ml-8"><Widgets /></button>
      <nav className="ml-auto flex">
        {apps.map(([name, Icon, state]) => (
          <button key={name} aria-label={name} className="relative flex h-20 w-[88px] items-center justify-center">
            {state === "active" && <span className="absolute inset-x-1 inset-y-0 rounded-lg border-2 border-white/10 bg-white/5" />}
            <span className="relative"><Icon /></span>
            {state === "open" && <span className="absolute bottom-0.5 h-1.5 w-3 rounded-full bg-[#959db2]" />}
            {state === "active" && <span className="absolute bottom-0.5 h-1.5 w-8 rounded-full bg-[#60cdff]" />}
          </button>
        ))}
      </nav>
      <div className="ml-10 flex items-center">
        <button aria-label="Hidden icons" className="mr-7"><ChevronUp className="size-10" strokeWidth={1.300} /></button>
        <button aria-label="Sync paused" className="mr-7">
          <Svg box="0 0 36 32" className="h-8 w-9">
            <path d="M10 27a8 8 0 0 1-2-14 10 10 0 0 1 18-3 9 9 0 0 1 3 17z" fill="#8d96ac" /><path d="m8 4 21 26" stroke="#fff" strokeWidth="2" />
          </Svg>
        </button>
        <button aria-label="Cloud status" className="mr-7">
          <Svg box="0 0 36 32" className="h-8 w-9">
            <path d="M8 26a8 8 0 0 1-2-14 10 10 0 0 1 18-3 9 9 0 0 1 3 17z" fill="#c3c8d2" /><circle cx="26" cy="22" r="10" fill="#60cdff" />
            <path d="M26 21v7M26 15v3" stroke="#10203f" strokeWidth="2.500" />
          </Svg>
        </button>
        <button aria-label="Network" className="mr-3.5"><Wifi className="size-9" strokeWidth={1.500} /></button>
        <button aria-label="Volume" className="mr-6"><Volume2 className="size-9" strokeWidth={1.500} /></button>
        <div className="w-28 text-right text-[23px] leading-8 whitespace-nowrap"><div>8:24 AM</div><div className="flex justify-end">7/26/2025</div></div>
        <button aria-label="Focus" className="mr-9 ml-4">
          <Svg>
            <path d="M14 3c8 2 13 6 13 13 0 9-12 16-21 9 8-1 12-5 12-12 0-4-1-7-4-10z" stroke="#fff" strokeWidth="2" strokeLinejoin="round" />
          </Svg>
        </button>
      </div>
    </footer>
  );
}

export default function App() {
  return (
    <div className="flex h-screen flex-col overflow-hidden bg-[#fcdac9] font-['Open_Sans','Noto_Sans',sans-serif] text-[#1a2630]">
      <header className="shrink-0">
        <TabStrip />
        <Toolbar />
      </header>
      <div className="flex min-h-0 flex-1">
        <CourseForm />
        <Scrollbar />
      </div>
      <Taskbar />
    </div>
  );
}
